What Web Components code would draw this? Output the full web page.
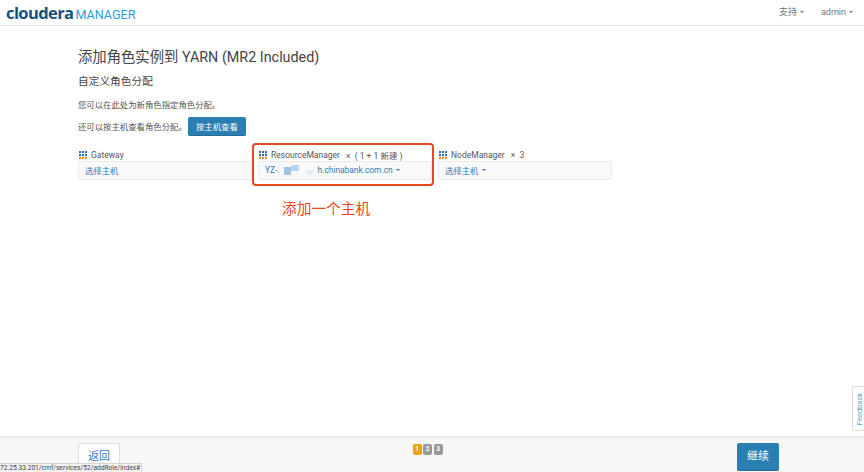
<!DOCTYPE html>
<html lang="zh">
<head>
<meta charset="utf-8">
<title>Cloudera Manager</title>
<style>
  html, body { margin: 0; height: 100%; }
  body {
    width: 864px; height: 472px; overflow: hidden; position: relative;
    display: flex; flex-direction: column; background: #fff; color: #444;
    font-family: Roboto, "Noto Sans CJK SC", sans-serif;
  }
</style>
</head>
<body>
<cm-header></cm-header>
<cm-page>
  <role-column slot="roles" role="Gateway" link="选择主机"></role-column>
  <role-column slot="roles" role="ResourceManager" count="×&nbsp;&nbsp;( 1 + 1 新建 )" masked></role-column>
  <role-column slot="roles" role="NodeManager" count="×&nbsp;&nbsp;3" link="选择主机" caret></role-column>
</cm-page>
<cm-footer></cm-footer>
<cm-feedback></cm-feedback>
<cm-status>72.25.33.201/cmf/services/52/addRole/index#</cm-status>

<script>
class CmHeader extends HTMLElement {
  connectedCallback() {
    const shadow = this.attachShadow({ mode: 'open' });
    shadow.innerHTML = `<style>
      :host { display: flex; flex: none; height: 25px; align-items: center; justify-content: space-between;
              border-bottom: 1px solid #e6e6e6; padding: 0 11px 0 6px; }
      .logo { display: flex; align-items: baseline; margin-top: -1px; }
      .c { font: bold 16.5px "Open Sans", sans-serif; color: #17507a; letter-spacing: -.6px; }
      .m { font: 12.6px Roboto, sans-serif; color: #2d9fdc; margin-left: 2px; }
      nav { display: flex; align-items: center; gap: 17px; font-size: 9px; line-height: 12px; color: #777; margin-top: -1px; }
      nav span { display: flex; align-items: center; }
      i { display: block; border: 2.5px solid transparent; border-top-color: #777; border-bottom: 0; margin-left: 3px; }
    </style>
    <div class="logo"><span class="c">cloudera</span><span class="m">MANAGER</span></div>
    <nav><span>支持<i></i></span><span>admin<i></i></span></nav>`;
  }
}
customElements.define('cm-header', CmHeader);

class CmPage extends HTMLElement {
  connectedCallback() {
    const shadow = this.attachShadow({ mode: 'open' });
    shadow.innerHTML = `<style>
      :host { display: block; flex: 1; padding: 0 0 0 78px; position: relative; }
      h1 { font-size: 14.35px; font-weight: 400; margin: 23px 0 0; line-height: 17px; color: #444; }
      h2 { font-size: 10.7px; font-weight: 400; margin: 7px 0 0; line-height: 18px; color: #444; }
      p { font-size: 8.4px; margin: 7px 0 0; line-height: 14px; color: #555; }
      .by { display: flex; align-items: center; gap: 1px; font-size: 8.4px; margin-top: 5px; color: #555; }
      .by span { margin-top: -2px; }
      button { font: inherit; font-size: 8.4px; color: #fff; background: #2b7eb0; border: 0; border-bottom: 1px solid #256c97;
               border-radius: 2px; width: 58px; height: 19px; padding: 0; }
      .roles { display: flex; margin-top: 13px; }
      .mark { position: absolute; left: 252px; top: 117px; width: 178px; height: 39px;
              border: 2px solid #e8481c; border-radius: 4px; }
      .note { position: absolute; left: 282px; top: 174px; font-size: 14.7px; line-height: 18px; color: #e8481c; }
    </style>
    <h1>添加角色实例到 YARN (MR2 Included)</h1>
    <h2>自定义角色分配</h2>
    <p>您可以在此处为新角色指定角色分配。</p>
    <div class="by"><span>还可以按主机查看角色分配。</span><button>按主机查看</button></div>
    <div class="roles"><slot name="roles"></slot></div>
    <div class="mark"></div>
    <div class="note">添加一个主机</div>`;
  }
}
customElements.define('cm-page', CmPage);

class RoleColumn extends HTMLElement {
  connectedCallback() {
    const shadow = this.attachShadow({ mode: 'open' });
    const role = this.getAttribute('role') || '';
    const count = this.getAttribute('count') || '';
    const link = this.getAttribute('link');
    const caret = this.hasAttribute('caret') ? '<i></i>' : '';
    const host = this.hasAttribute('masked')
      ? `YZ-.<b class="mask"></b><b class="mask2"></b>h.chinabank.com.cn<i></i>`
      : `${link}${caret}`;
    // grid icon: blue rows on top, orange row at the bottom
    const cells = [0, 3, 6].map((y, r) => [0, 3, 6].map(x =>
      `<rect x="${x}" y="${y}" width="2" height="2.2" fill="${r < 2 ? '#3a6db0' : '#e8902a'}"/>`).join('')).join('');
    shadow.innerHTML = `<style>
      :host { display: block; width: 174px; margin-right: 6px; }
      .top { display: flex; align-items: center; height: 12px; font-size: 8.5px; color: #555; white-space: pre; }
      svg { flex: none; margin-right: 4px; margin-left: 1px; }
      .count { margin-left: 6px; }
      .box { display: flex; align-items: center; height: 19px; padding: 0 0 2px 6px; box-sizing: border-box;
             background: #f9f9f9; border: 1px solid #e9e9e9; border-radius: 2px; font-size: 8.4px; color: #337ab7; white-space: nowrap; }
      i { display: inline-block; border: 2.5px solid transparent; border-top-color: #337ab7; border-bottom: 0; margin-left: 3px; }
      .mask { display: inline-block; width: 15px; height: 10px; margin: 0 7px 0 4px;
              background: linear-gradient(180deg, transparent 25%, #9ec6e2 25%) 0 0/7px 100% no-repeat,
                          linear-gradient(180deg, #b6d4ea 65%, transparent 65%) 7px 0/8px 100% no-repeat; }
      .mask2 { display: inline-block; width: 7px; height: 5px; margin: 5px 5px 0 0; background: #e6eff5; }
    </style>
    <div class="top">
      <svg width="8" height="9" viewBox="0 0 8 9">${cells}</svg>
      <span>${role}</span><span class="count">${count}</span>
    </div>
    <div class="box">${host}</div>`;
  }
}
customElements.define('role-column', RoleColumn);

class CmFooter extends HTMLElement {
  connectedCallback() {
    const shadow = this.attachShadow({ mode: 'open' });
    shadow.innerHTML = `<style>
      :host { display: flex; flex: none; height: 36px; box-sizing: border-box; background: #f7f7f7; border-top: 2px solid #ececec;
              justify-content: space-between; padding: 5px 85px 0 78px; }
      .back { box-sizing: border-box; width: 42px; height: 40px; background: #fff; border: 1px solid #ddd; border-radius: 2px;
              color: #337ab7; font-size: 11px; text-align: center; line-height: 26px; }
      .steps { display: flex; gap: 1.5px; height: 11px; margin: 1px 0 0 -2px; font: bold 6.5px/11px Roboto, sans-serif; color: #fff; }
      .steps span { width: 9px; background: #999; border-radius: 2px; text-align: center; }
      .steps .on { background: #e9a20c; }
      .next { box-sizing: border-box; width: 42px; height: 28px; background: #2b7eb0; border-bottom: 1px solid #256c97; border-radius: 2px; color: #fff;
              font-size: 11px; text-align: center; line-height: 28px; }
    </style>
    <div class="back">返回</div>
    <div class="steps"><span class="on">1</span><span>2</span><span>3</span></div>
    <div class="next">继续</div>`;
  }
}
customElements.define('cm-footer', CmFooter);

class CmFeedback extends HTMLElement {
  connectedCallback() {
    const shadow = this.attachShadow({ mode: 'open' });
    shadow.innerHTML = `<style>
      :host { position: absolute; right: 0; top: 386px; width: 12px; height: 45px; box-sizing: border-box;
              border: 1px solid #ddd; border-right: 0; border-radius: 2px 0 0 2px; background: #fff; }
      span { position: absolute; left: 50%; top: 50%; transform: translate(-50%, -50%) rotate(-90deg);
             font-size: 7.5px; color: #5f9fcb; white-space: nowrap; }
    </style><span>Feedback</span>`;
  }
}
customElements.define('cm-feedback', CmFeedback);

class CmStatus extends HTMLElement {
  connectedCallback() {
    const shadow = this.attachShadow({ mode: 'open' });
    shadow.innerHTML = `<style>
      :host { position: absolute; left: 0; bottom: 0; height: 8px; line-height: 8px; padding: 0 1px 0 0;
              background: #f2f2f2; border: 1px solid #d6d6d6; border-width: 1px 1px 0 0; font-size: 6.65px; color: #444; white-space: nowrap; }
    </style><slot></slot>`;
  }
}
customElements.define('cm-status', CmStatus);
</script>
</body>
</html>
